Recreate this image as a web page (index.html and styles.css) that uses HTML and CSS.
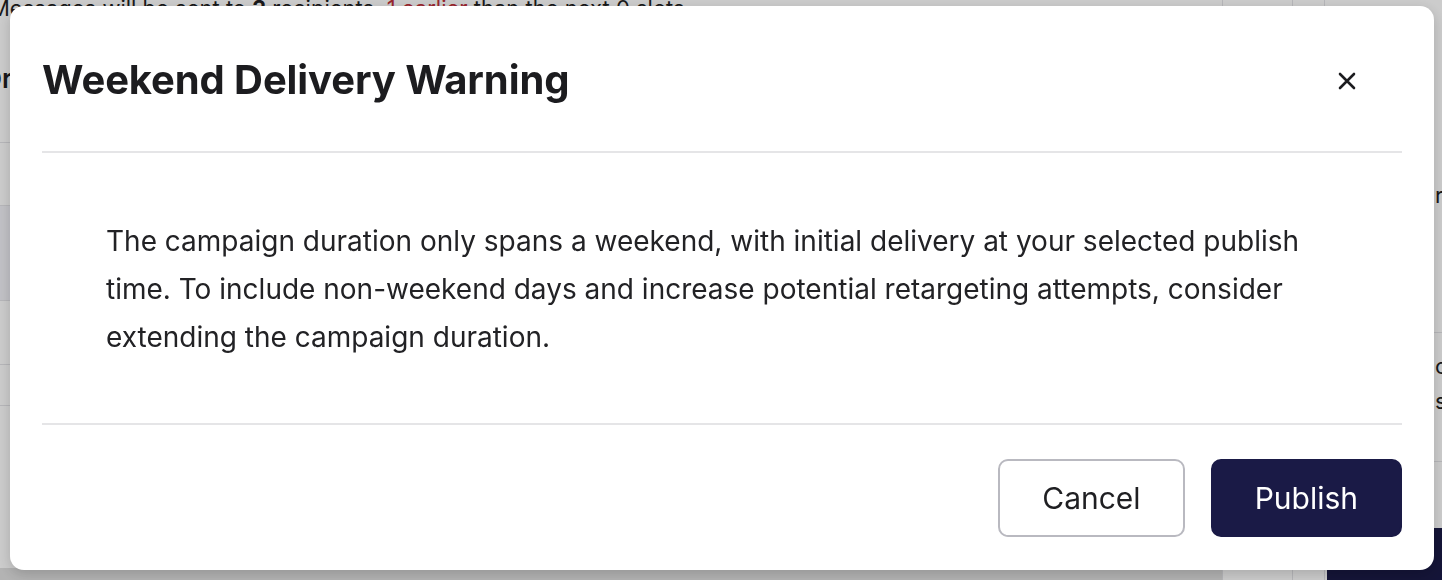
FILE: index.html
```html
<!DOCTYPE html>
<html lang="en">

<head>
  <meta charset="UTF-8">
  <meta name="viewport" content="width=device-width, initial-scale=1.0">
  <title>Campaign schedule</title>
  <link rel="stylesheet" href="styles.css">
</head>

<body>
  <!-- page behind the dialog -->
  <div class="page">
    <div class="main">
      <p class="lead">Messages will be sent to <b>2</b> recipients, <span class="late">1 earlier</span> than the next 0 slots</p>
      <h2 class="section-title">Orders</h2>
      <div class="rows">
        <div class="row">Recipients</div>
        <div class="row alt">Schedule</div>
        <div class="row">Channel</div>
        <div class="row">Retargeting</div>
      </div>
      <div class="page-footer"></div>
    </div>
    <div class="side">
      <div class="col narrow"></div>
      <div class="col tiny"></div>
      <div class="col wide">
        <div class="cell first">rate</div>
        <div class="cell">cost</div>
        <div class="cell">sends</div>
        <button class="side-btn">Next</button>
      </div>
    </div>
  </div>

  <div class="overlay">
    <div class="modal" role="dialog" aria-labelledby="modalTitle">
      <div class="modal-header">
        <h1 id="modalTitle">Weekend Delivery Warning</h1>
        <button class="close-btn" aria-label="Close">
          <svg width="18" height="18" viewBox="0 0 18 18">
            <path d="M2 2 L16 16 M16 2 L2 16" stroke="#1c1c1f" stroke-width="2.6" stroke-linecap="round" fill="none"/>
          </svg>
        </button>
      </div>
      <div class="modal-body">
        <p>The campaign duration only spans a weekend, with initial delivery at your selected publish time. To include non-weekend days and increase potential retargeting attempts, consider extending the campaign duration.</p>
      </div>
      <div class="modal-footer">
        <button class="btn btn-outline">Cancel</button>
        <button class="btn btn-primary">Publish</button>
      </div>
    </div>
  </div>
</body>

</html>
```

FILE: styles.css
```css
body {
  font-family: Inter, 'Noto Sans', sans-serif;
  margin: 0;
  padding: 0;
  color: #1f1f22;
  background-color: #ffffff;
  overflow: hidden;
}

/* page underneath */
.page {
  display: grid;
  grid-template-columns: 1fr 220px;
  height: 100vh;
}

.main {
  display: flex;
  flex-direction: column;
}

.lead {
  margin: -4px 0 0 -10px;
  font-size: 22px;
  line-height: 24px;
  white-space: nowrap;
}

.lead .late {
  color: #c0303a;
}

.section-title {
  margin: 44px 0 0 -18px;
  font-size: 26px;
  font-weight: 600;
  line-height: 30px;
}

.rows {
  margin-top: 48px;
  border-top: 1px solid #e4e4e8;
}

.row {
  height: 62px;
  border-bottom: 1px solid #e4e4e8;
  padding-left: 20px;
  font-size: 20px;
  line-height: 62px;
}

.row.alt {
  height: 94px;
  background-color: #f2f2f8;
}

.row:nth-child(3) {
  height: 63px;
}

.row:nth-child(4) {
  height: 40px;
}

.page-footer {
  margin-top: auto;
  height: 12px;
  background-color: #e0e0e0;
}

.side {
  display: grid;
  grid-template-columns: 70px 32px 1fr;
}

.col {
  border-left: 1px solid #e4e4e8;
}

.col.wide {
  display: flex;
  flex-direction: column;
}

.cell {
  padding-left: 110px;
  font-size: 22px;
  white-space: nowrap;
  overflow: hidden;
}

.cell.first {
  margin-top: 182px;
  height: 150px;
  border-bottom: 1px solid #e4e4e8;
}

.cell:nth-child(2) {
  padding-top: 20px;
  height: 35px;
}

.cell:nth-child(3) {
  height: 73px;
  border-bottom: 1px solid #e4e4e8;
}

.side-btn {
  margin: auto 0 0 2px;
  height: 52px;
  border: none;
  border-radius: 10px 0 0 0;
  background-color: #1a1a46;
  color: #fff;
}

/* dialog */
.overlay {
  position: fixed;
  inset: 0;
  background-color: rgba(0, 0, 0, 0.2);
  padding: 6px 8px 10px 10px;
  display: flex;
}

.modal {
  flex: 1;
  display: flex;
  flex-direction: column;
  background-color: #ffffff;
  border-radius: 14px;
  box-shadow: 0 4px 14px rgba(0, 0, 0, 0.18);
}

.modal-header {
  display: flex;
  align-items: center;
  justify-content: space-between;
  height: 145px;
  margin: 0 32px;
  border-bottom: 2px solid #e5e5e7;
}

.modal-header h1 {
  margin: 2px 0 0 0;
  font-size: 40px;
  font-weight: 700;
  letter-spacing: -0.1px;
  color: #1c1c1f;
}

.close-btn {
  width: 40px;
  height: 40px;
  margin: 4px 35px 0 0;
  border: none;
  background: none;
  padding: 0;
  display: flex;
  align-items: center;
  justify-content: center;
  cursor: pointer;
}

.modal-body {
  margin: 0 32px;
  padding: 64px 64px 62px;
  border-bottom: 2px solid #e5e5e7;
}

.modal-body p {
  margin: 0;
  font-size: 28px;
  line-height: 48px;
  color: #222225;
}

.modal-footer {
  display: flex;
  justify-content: flex-end;
  gap: 26px;
  padding: 34px 32px 0;
}

.btn {
  height: 78px;
  padding: 0 42px;
  border-radius: 10px;
  font-family: Inter, sans-serif;
  font-size: 30px;
  cursor: pointer;
}

.btn-outline {
  background-color: #ffffff;
  color: #1f1f22;
  border: 2px solid #b9b9c0;
}

.btn-primary {
  background-color: #1a1a46;
  color: #ffffff;
  border: 2px solid #1a1a46;
}
```
